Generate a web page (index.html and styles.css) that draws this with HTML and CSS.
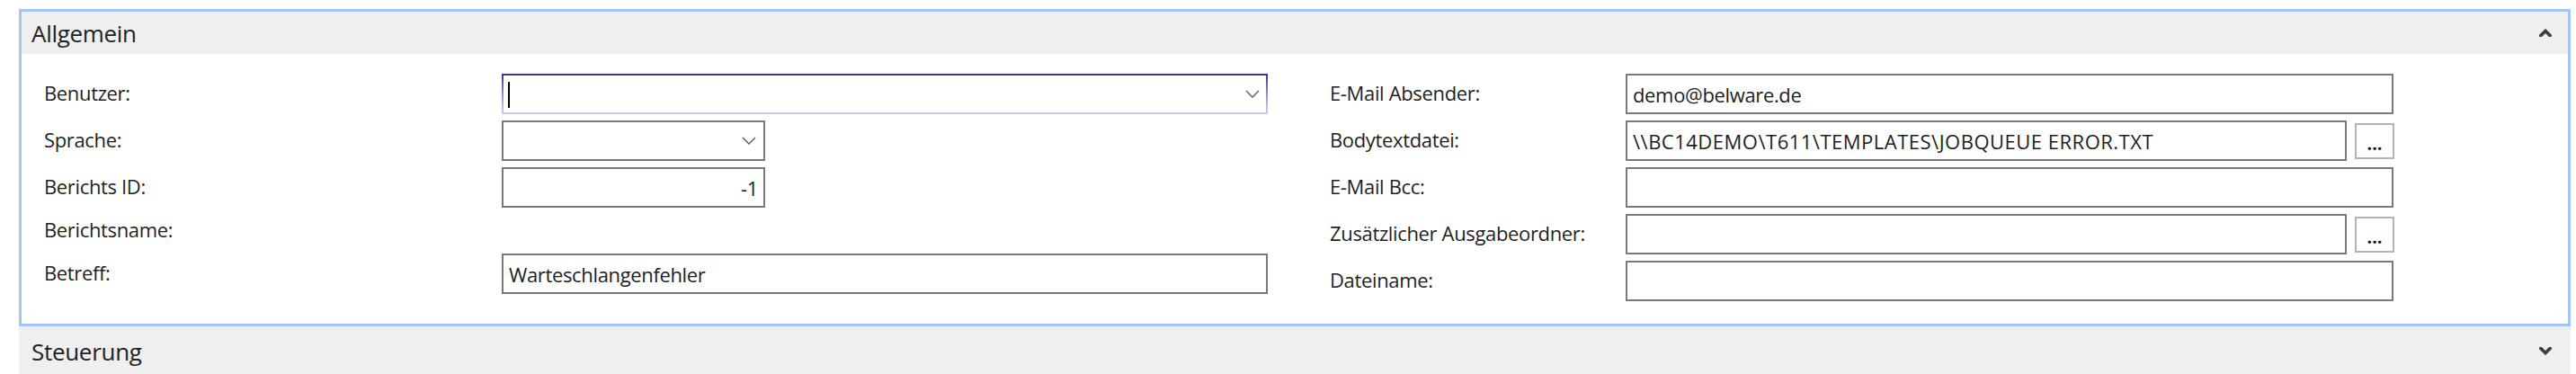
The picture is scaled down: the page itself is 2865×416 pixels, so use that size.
FILE: index.html
```html
<!DOCTYPE html>
<html lang="de">
<head>
<meta charset="utf-8">
<title>Allgemein</title>
<link rel="stylesheet" href="styles.css">
</head>
<body>
<div class="page">
  <section class="group expanded">
    <div class="group-header">
      <span class="group-title">Allgemein</span>
      <svg class="group-chevron" viewBox="0 0 14 9" width="14" height="9"><polyline points="1.8,7.6 7,2.4 12.2,7.6" /></svg>
    </div>
    <div class="group-body">
      <div class="col col-left">
        <div class="row">
          <span class="label">Benutzer:</span>
          <div class="input combo focused wide"><span class="caret"></span><svg class="dd" viewBox="0 0 16 9" width="16" height="9"><polyline points="1,1 8,8 15,1" /></svg></div>
        </div>
        <div class="row">
          <span class="label">Sprache:</span>
          <div class="input combo small"><svg class="dd" viewBox="0 0 16 9" width="16" height="9"><polyline points="1,1 8,8 15,1" /></svg></div>
        </div>
        <div class="row">
          <span class="label">Berichts ID:</span>
          <div class="input small numeric">-1</div>
        </div>
        <div class="row short">
          <span class="label">Berichtsname:</span>
        </div>
        <div class="row">
          <span class="label">Betreff:</span>
          <div class="input wide">Warteschlangenfehler</div>
        </div>
      </div>
      <div class="col col-right">
        <div class="row">
          <span class="label">E-Mail Absender:</span>
          <div class="input full">demo@belware.de</div>
        </div>
        <div class="row">
          <span class="label">Bodytextdatei:</span>
          <div class="input-group">
            <div class="input grow path">\\BC14DEMO\T611\TEMPLATES\JOBQUEUE ERROR.TXT</div>
            <span class="browse">...</span>
          </div>
        </div>
        <div class="row">
          <span class="label">E-Mail Bcc:</span>
          <div class="input full"></div>
        </div>
        <div class="row">
          <span class="label">Zusätzlicher Ausgabeordner:</span>
          <div class="input-group">
            <div class="input grow"></div>
            <span class="browse">...</span>
          </div>
        </div>
        <div class="row">
          <span class="label">Dateiname:</span>
          <div class="input full"></div>
        </div>
      </div>
    </div>
  </section>
  <section class="group collapsed">
    <div class="group-header">
      <span class="group-title">Steuerung</span>
      <svg class="group-chevron" viewBox="0 0 14 9" width="14" height="9"><polyline points="1.8,1.4 7,6.6 12.2,1.4" /></svg>
    </div>
  </section>
</div>
</body>
</html>
```

FILE: styles.css
```css
html, body {
  margin: 0;
  padding: 0;
  background: #ffffff;
}

body {
  font-family: "Open Sans", "Noto Sans", sans-serif;
  color: #1e1e1e;
}

.page {
  width: 2838px;
  padding: 10px 0 0 21px;
}

.group {
  box-sizing: border-box;
  width: 2838px;
}

.group.expanded {
  border: 3px solid #a2c6f7;
}

.group-header {
  display: flex;
  align-items: center;
  justify-content: space-between;
  background: #efefef;
  font-size: 26px;
  color: #222222;
  letter-spacing: -0.3px;
}

.expanded .group-header {
  height: 47px;
  padding: 0 18px 0 11px;
}

.collapsed .group-header {
  height: 53px;
  padding: 2px 21px 0 14px;
  box-sizing: border-box;
}

.group-chevron polyline {
  fill: none;
  stroke: #3f3f3f;
  stroke-width: 3.6;
  stroke-linecap: square;
  stroke-linejoin: miter;
}

.group-body {
  display: flex;
  gap: 69px;
  padding: 22px 0 25px 25px;
}

.col {
  display: flex;
  flex-direction: column;
  gap: 7px;
}

.col-left {
  width: 1361px;
}

.col-right {
  width: 1183px;
}

.row {
  display: flex;
  align-items: center;
  height: 45px;
}

.row.short {
  height: 37px;
}

.label {
  font-size: 22px;
  letter-spacing: -0.35px;
  color: #1f1f1f;
  flex: none;
  margin-top: -3px;
}

.col-left .label {
  width: 509px;
}

.col-right .label {
  width: 329px;
}

.input {
  box-sizing: border-box;
  height: 45px;
  border: 2px solid #7a7a7a;
  background: #ffffff;
  display: flex;
  align-items: center;
  padding: 0 6px;
  font-size: 22px;
  letter-spacing: -0.35px;
  color: #1e1e1e;
  white-space: nowrap;
  overflow: hidden;
}

.input.path {
  letter-spacing: 0.5px;
}

.input.wide {
  width: 852px;
}

.input.small {
  width: 293px;
}

.input.full {
  width: 855px;
}

.input.numeric {
  justify-content: flex-end;
  padding-right: 6px;
}

.input.combo {
  padding-right: 7px;
}

.input.focused {
  border-style: solid;
  border-width: 2px;
  border-image: linear-gradient(to bottom, #3c3789, #9c98c8 55%, #cdc9e4) 1;
  padding-left: 5px;
}

.caret {
  display: block;
  width: 2px;
  height: 29px;
  background: #000000;
  margin-top: 1px;
}

.dd {
  margin-left: auto;
}

.dd polyline {
  fill: none;
  stroke: #6a6a6a;
  stroke-width: 1.6;
}

.input.small .dd {
  margin-right: 1px;
}

.input-group {
  display: flex;
  align-items: center;
  gap: 9px;
  width: 855px;
}

.input.grow {
  width: 802px;
}

.browse {
  box-sizing: border-box;
  width: 44px;
  height: 40px;
  border: 2px solid #b3b3b3;
  background: #ffffff;
  display: flex;
  align-items: flex-end;
  justify-content: center;
  padding-bottom: 5px;
  font-size: 20px;
  font-weight: 700;
  line-height: 1;
  color: #111111;
  letter-spacing: 0;
}
```
